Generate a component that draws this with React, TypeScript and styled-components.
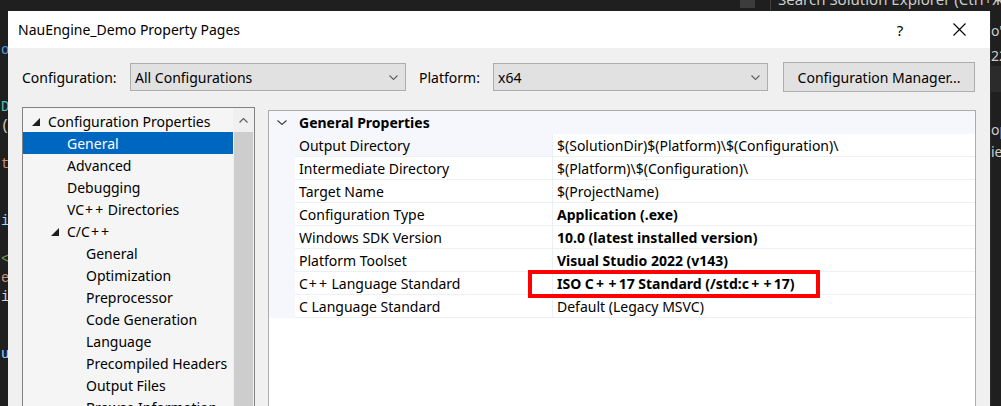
import { Fragment } from 'react';
import styled, { createGlobalStyle } from 'styled-components';

const GlobalStyle = createGlobalStyle`
  html, body {
    margin: 0;
    padding: 0;
    background: #1f1f1f;
  }
  body {
    font-family: "Segoe UI", "Noto Sans", "Open Sans", sans-serif;
    font-size: 14px;
    color: #000000;
    overflow: hidden;
  }
  * {
    box-sizing: border-box;
  }
`;

interface TreeItem {
  label: string;
  level: number;
  expander?: boolean;
  selected?: boolean;
}

interface Property {
  name: string;
  value: string;
  bold?: boolean;
}

const treeItems: TreeItem[] = [
  { label: 'Configuration Properties', level: 0, expander: true },
  { label: 'General', level: 1, selected: true },
  { label: 'Advanced', level: 1 },
  { label: 'Debugging', level: 1 },
  { label: 'VC++ Directories', level: 1 },
  { label: 'C/C++', level: 1, expander: true },
  { label: 'General', level: 2 },
  { label: 'Optimization', level: 2 },
  { label: 'Preprocessor', level: 2 },
  { label: 'Code Generation', level: 2 },
  { label: 'Language', level: 2 },
  { label: 'Precompiled Headers', level: 2 },
  { label: 'Output Files', level: 2 },
  { label: 'Browse Information', level: 2 },
];

const properties: Property[] = [
  { name: 'Output Directory', value: '$(SolutionDir)$(Platform)\\$(Configuration)\\' },
  { name: 'Intermediate Directory', value: '$(Platform)\\$(Configuration)\\' },
  { name: 'Target Name', value: '$(ProjectName)' },
  { name: 'Configuration Type', value: 'Application (.exe)', bold: true },
  { name: 'Windows SDK Version', value: '10.0 (latest installed version)', bold: true },
  { name: 'Platform Toolset', value: 'Visual Studio 2022 (v143)', bold: true },
  { name: 'C++ Language Standard', value: 'ISO C++17 Standard (/std:c++17)', bold: true },
  { name: 'C Language Standard', value: 'Default (Legacy MSVC)' },
];

// code editor peeking out behind the dialog (line index -> glyph)
const editorLines: { line: number; text: string; color: string }[] = [
  { line: 0, text: 'o', color: '#569cd6' },
  { line: 3, text: 'D', color: '#4ec9b0' },
  { line: 4, text: '(', color: '#d4d4d4' },
  { line: 6, text: 't', color: '#ce9178' },
  { line: 9, text: 'i', color: '#9cdcfe' },
  { line: 11, text: '<', color: '#6a9955' },
  { line: 12, text: 'e', color: '#ce9178' },
  { line: 13, text: 'i', color: '#d4d4d4' },
  { line: 16, text: 'u', color: '#9cdcfe' },
];

const explorerLines: { h: number; text?: string; band?: boolean }[] = [
  { h: 9 },
  { h: 22, text: "o'" },
  { h: 4 },
  { h: 20, text: '22' },
  { h: 26, band: true },
  { h: 27 },
  { h: 22, text: 'op' },
  { h: 22, text: 'ie' },
];

const Screen = styled.div`
  position: relative;
  width: 1001px;
  height: 406px;
  overflow: hidden;
  background: #1f1f1f;
  display: flex;
  flex-direction: column;
`;

const TopStrip = styled.div`
  height: 11px;
  flex-shrink: 0;
  display: flex;
  justify-content: flex-end;
  overflow: hidden;
`;

const StripBlock = styled.div`
  width: 15px;
  height: 8px;
  margin-right: 15px;
  background: #3c3c3c;
`;

const SearchBox = styled.div`
  width: 231px;
  height: 11px;
  overflow: hidden;
  border-left: 1px solid #3f3f46;
  padding-left: 7px;
  color: #cccccc;
  font-size: 15px;
  line-height: 18px;
  white-space: nowrap;

  span {
    display: block;
    margin-top: -10px;
  }
`;

const Middle = styled.div`
  flex: 1;
  min-height: 0;
  display: flex;
`;

const EditorGutter = styled.div`
  width: 8px;
  flex-shrink: 0;
  overflow: hidden;
  padding-top: 30px;
  font-family: "Liberation Mono", monospace;
  font-size: 14px;
`;

const EditorLine = styled.div<{ $color: string }>`
  height: 19px;
  line-height: 19px;
  padding-left: 1px;
  color: ${(p) => p.$color};
`;

const ExplorerGutter = styled.div`
  flex: 1;
  overflow: hidden;
  border-left: 1px solid #2b2b2b;
  color: #cccccc;
  font-size: 14px;
`;

const ExplorerLine = styled.div<{ $h: number; $band?: boolean }>`
  height: ${(p) => p.$h}px;
  line-height: ${(p) => p.$h}px;
  white-space: nowrap;
  background: ${(p) => (p.$band ? '#2b2b2b' : 'transparent')};
`;

const Dialog = styled.div`
  width: 982px;
  flex-shrink: 0;
  background: #f0f0f0;
  display: flex;
  flex-direction: column;
`;

const TitleBar = styled.div`
  height: 37px;
  flex-shrink: 0;
  background: #ffffff;
  display: flex;
  align-items: center;
  padding: 0 8px 0 10px;
`;

const Title = styled.div`
  font-size: 14px;
  color: #000000;
`;

const TitleButtons = styled.div`
  margin-left: auto;
  display: flex;
  gap: 10px;
`;

const TitleButton = styled.div<{ $shift?: number }>`
  width: 46px;
  height: 30px;
  display: flex;
  align-items: center;
  justify-content: center;
  padding-right: ${(p) => p.$shift ?? 0}px;
  font-size: 15px;
  color: #000000;
`;

const Toolbar = styled.div`
  height: 59px;
  flex-shrink: 0;
  display: flex;
  align-items: flex-start;
  padding: 14px 0 0 14px;
`;

const ToolbarRow = styled.div`
  height: 30px;
  display: flex;
  align-items: center;
`;

const FieldLabel = styled.div<{ $width: number; $gap?: number }>`
  width: ${(p) => p.$width}px;
  margin-left: ${(p) => p.$gap ?? 0}px;
  color: #000000;
`;

const Dropdown = styled.div<{ $width: number }>`
  width: ${(p) => p.$width}px;
  height: 28px;
  display: flex;
  align-items: center;
  padding: 0 7px 0 4px;
  background: #e1e1e1;
  border: 1px solid #adadad;

  span {
    flex: 1;
  }
`;

const Button = styled.div`
  width: 192px;
  height: 30px;
  margin-left: 15px;
  display: flex;
  align-items: center;
  justify-content: center;
  background: #e1e1e1;
  border: 1px solid #adadad;
`;

const Main = styled.div`
  flex: 1;
  min-height: 0;
  display: flex;
  align-items: flex-start;
  gap: 13px;
  padding-left: 14px;
`;

const Tree = styled.div`
  width: 233px;
  height: 100%;
  flex-shrink: 0;
  display: flex;
  border: 1px solid #828282;
  border-bottom: none;
`;

const TreeList = styled.div`
  flex: 1;
  overflow: hidden;
  background: #f5f5f5;
  padding-top: 2px;
`;

const TreeRow = styled.div<{ $level: number; $selected?: boolean }>`
  height: 22px;
  display: flex;
  align-items: center;
  padding-left: ${(p) => 9 + p.$level * 19}px;
  white-space: nowrap;
  background: ${(p) => (p.$selected ? '#0067c0' : 'transparent')};
  color: ${(p) => (p.$selected ? '#ffffff' : '#000000')};
`;

const Expander = styled.div`
  width: 16px;
  height: 22px;
  flex-shrink: 0;
  display: flex;
  align-items: center;
  padding-top: 1px;
`;

const ScrollBar = styled.div`
  width: 21px;
  flex-shrink: 0;
  background: #f0f0f0;
  display: flex;
  flex-direction: column;
`;

const ScrollArrow = styled.div`
  height: 24px;
  display: flex;
  align-items: center;
  justify-content: center;
`;

const ScrollThumb = styled.div`
  flex: 1;
  margin: 0 1px;
  background: #cdcdcd;
`;

const PropertyPanel = styled.div`
  width: 708px;
  height: calc(100% - 3px);
  margin-top: 3px;
  background: #ffffff;
  border: 1px solid #acacac;
  border-bottom: none;
  display: grid;
  grid-template-columns: 26px 258px 1fr;
  grid-auto-rows: 23px;
  align-content: start;
`;

const CategoryRow = styled.div`
  grid-column: 1 / -1;
  display: flex;
  align-items: center;
  background: #f5f7fc;
  font-weight: 700;
`;

const CategoryToggle = styled.div`
  width: 26px;
  margin-right: 4px;
  display: flex;
  justify-content: center;
`;

const Margin = styled.div`
  background: #f5f7fc;
`;

const NameCell = styled.div<{ $selected?: boolean }>`
  display: flex;
  align-items: center;
  padding-left: 4px;
  white-space: nowrap;
  background: ${(p) => (p.$selected ? '#f5f7fc' : '#ffffff')};
  border-bottom: 1px solid #eceff4;
  border-right: 1px solid #eceff4;
`;

const ValueCell = styled.div<{ $bold?: boolean }>`
  display: flex;
  align-items: center;
  padding-left: 4px;
  white-space: nowrap;
  font-weight: ${(p) => (p.$bold ? 700 : 400)};
  border-bottom: 1px solid #eceff4;
`;

// Segoe UI draws "+" noticeably wider than the fallback font does
const Plus = styled.span<{ $bold?: boolean }>`
  margin: 0 ${(p) => (p.$bold ? 2.2 : 1)}px;
`;

const Highlight = styled.div`
  position: absolute;
  left: 528px;
  top: 270px;
  width: 292px;
  height: 28px;
  border: 4px solid #ff0000;
  pointer-events: none;
`;

function Text({ children, bold }: { children: string; bold?: boolean }) {
  return (
    <span>
      {children.split('+').map((part, i) => (
        <Fragment key={i}>
          {i > 0 && <Plus $bold={bold}>+</Plus>}
          {part}
        </Fragment>
      ))}
    </span>
  );
}

function ChevronDown({ width = 9, color = '#606060' }: { width?: number; color?: string }) {
  return (
    <svg width={width} height={5} viewBox={`0 0 ${width} 5`}>
      <polyline points={`0.5,0.5 ${width / 2},4.5 ${width - 0.5},0.5`} fill="none" stroke={color} strokeWidth="1.1" />
    </svg>
  );
}

function ExpandedTriangle() {
  return (
    <svg width="8" height="8" viewBox="0 0 8 8">
      <polygon points="8,0 8,8 0,8" fill="#1e1e1e" />
    </svg>
  );
}

function CloseIcon() {
  return (
    <svg width="13" height="13" viewBox="0 0 13 13">
      <path d="M0.5 0.5 L12.5 12.5 M12.5 0.5 L0.5 12.5" stroke="#000000" strokeWidth="1.1" fill="none" />
    </svg>
  );
}

export default function App() {
  return (
    <Screen>
      <GlobalStyle />
      <TopStrip>
        <StripBlock />
        <SearchBox>
          <span>Search Solution Explorer (Ctrl+ж)</span>
        </SearchBox>
      </TopStrip>

      <Middle>
        <EditorGutter>
          {Array.from({ length: 18 }, (_, i) => {
            const hit = editorLines.find((l) => l.line === i);
            return (
              <EditorLine key={i} $color={hit?.color ?? '#d4d4d4'}>
                {hit?.text ?? ''}
              </EditorLine>
            );
          })}
        </EditorGutter>

        <Dialog>
          <TitleBar>
            <Title>NauEngine_Demo Property Pages</Title>
            <TitleButtons>
              <TitleButton $shift={6}>?</TitleButton>
              <TitleButton>
                <CloseIcon />
              </TitleButton>
            </TitleButtons>
          </TitleBar>

          <Toolbar>
            <ToolbarRow>
              <FieldLabel $width={108}>Configuration:</FieldLabel>
              <Dropdown $width={276}>
                <span>All Configurations</span>
                <ChevronDown />
              </Dropdown>
              <FieldLabel $width={74} $gap={13}>
                Platform:
              </FieldLabel>
              <Dropdown $width={275}>
                <span>x64</span>
                <ChevronDown />
              </Dropdown>
              <Button>Configuration Manager...</Button>
            </ToolbarRow>
          </Toolbar>

          <Main>
            <Tree>
              <TreeList>
                {treeItems.map((item, i) => (
                  <TreeRow key={i} $level={item.level} $selected={item.selected}>
                    <Expander>{item.expander && <ExpandedTriangle />}</Expander>
                    <Text>{item.label}</Text>
                  </TreeRow>
                ))}
              </TreeList>
              <ScrollBar>
                <ScrollArrow>
                  <svg width="9" height="5" viewBox="0 0 9 5">
                    <polyline points="0.5,4.5 4.5,0.5 8.5,4.5" fill="none" stroke="#606060" strokeWidth="1.2" />
                  </svg>
                </ScrollArrow>
                <ScrollThumb />
              </ScrollBar>
            </Tree>

            <PropertyPanel>
              <CategoryRow>
                <CategoryToggle>
                  <ChevronDown width={10} color="#3c3c3c" />
                </CategoryToggle>
                General Properties
              </CategoryRow>
              {properties.map((prop, i) => (
                <Fragment key={i}>
                  <Margin />
                  <NameCell $selected={i === 0}>
                    <Text>{prop.name}</Text>
                  </NameCell>
                  <ValueCell $bold={prop.bold}>
                    <Text bold={prop.bold}>{prop.value}</Text>
                  </ValueCell>
                </Fragment>
              ))}
            </PropertyPanel>
          </Main>
        </Dialog>

        <ExplorerGutter>
          {explorerLines.map((line, i) => (
            <ExplorerLine key={i} $h={line.h} $band={line.band}>
              {line.text}
            </ExplorerLine>
          ))}
        </ExplorerGutter>
      </Middle>

      <Highlight />
    </Screen>
  );
}
